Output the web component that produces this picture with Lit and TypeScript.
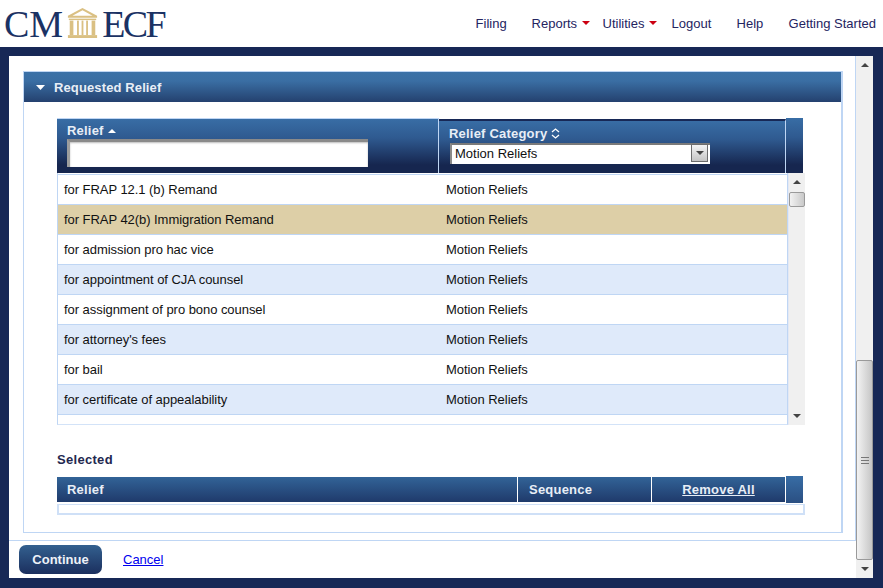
import { LitElement, html, css } from "lit";
import { customElement } from "lit/decorators.js";

const rows = [
  "for FRAP 12.1 (b) Remand",
  "for FRAP 42(b) Immigration Remand",
  "for admission pro hac vice",
  "for appointment of CJA counsel",
  "for assignment of pro bono counsel",
  "for attorney's fees",
  "for bail",
  "for certificate of appealability",
  "for coram nobis",
];

@customElement("app-root")
export class AppRoot extends LitElement {
  static styles = css`
    :host { display: block; width: 883px; height: 588px; overflow: hidden; font-family: "Liberation Sans", Arial, sans-serif; font-size: 13px; color: #111; background: #fff; }
    * { box-sizing: border-box; }
    .page { display: flex; flex-direction: column; height: 588px; }
    .top { height: 47px; display: flex; justify-content: space-between; background: #fff; flex: none; }
    .logo { display: flex; align-items: flex-start; padding: 3px 0 0 4px; font-family: "Liberation Serif", serif; font-size: 38px; line-height: 42px; color: #1b3264; }
    .logo svg { width: 31px; height: 30px; margin: 5px 4px 0 4px; flex: none; }
    .logo .ecf { letter-spacing: -2.6px; }
    nav { display: flex; padding: 16px 7px 0 0; line-height: 15px; color: #24245f; }
    nav span { display: inline-flex; align-items: flex-start; }
    nav i { display: block; width: 0; height: 0; border: 4px solid transparent; border-top: 4px solid #cc0011; border-bottom: 0; margin: 5px 0 0 5px; }
    .n1 { width: 56px; } .n2 { width: 71px; } .n3 { width: 69px; } .n4 { width: 65px; } .n5 { width: 52px; }
    .frame { flex: 1; min-height: 0; background: #172856; padding: 9px 10px 10px 9px; }
    .panel { display: flex; height: 522px; background: #fff; }
    .content { width: 847px; flex: none; display: flex; flex-direction: column; }
    .scroll { height: 485px; padding: 15px 0 0 14px; border-right: 1px solid #bfd6f4; border-bottom: 1px solid #bfd6f4; flex: none; }
    .section { width: 820px; height: 462px; border: 1px solid #bfd6f4; border-right-width: 2px; }
    .bar { height: 30px; display: flex; align-items: center; padding-left: 12px; gap: 9px; font-weight: bold; letter-spacing: .12px; color: #e8eef6; background: linear-gradient(#3b71a8, #3a6ea3 30%, #24416f); }
    .bar svg { width: 9px; height: 5px; }
    .body { padding: 16px 0 0 33px; width: 782px; }
    .thead { display: flex; width: 746px; height: 55px; }
    .th { background: linear-gradient(#386da5, #2f5a90 35%, #16264f 85%); color: #e8eef6; font-weight: bold; letter-spacing: .2px; }
    .th1 { width: 382px; padding: 4px 0 0 10px; border-right: 1px solid #bfd6f4; border-top: 1px solid #bfd6f4; height: 55px; }
    .th2 { width: 347px; padding: 5px 0 0 10px; border-top: 2px solid #172856; margin-top: 1px; height: 54px; border-right: 1px solid #bfd6f4; }
    .th3 { width: 17px; }
    .lbl { display: flex; align-items: center; gap: 4px; height: 15px; }
    .lbl svg { display: block; }
    .input { display: block; width: 301px; height: 28px; margin-top: 1px; padding: 0; background: #fff; border: 0; border-top: 3px solid #8a8a8a; border-left: 3px solid #9d9d9d; box-shadow: inset 0 1px 2px #bbb; }
    .select { display: flex; justify-content: space-between; width: 260px; height: 21px; margin: 2px 0 0 1px; background: #fff; border-top: 2px solid #7a7a7a; border-left: 2px solid #8a8a8a; color: #111; font-weight: normal; letter-spacing: 0; line-height: 17px; padding-left: 3px; }
    .arrow { width: 17px; height: 18px; margin: -1px 2px 0 0; background: linear-gradient(#f4f4f4, #c4c4c4); border: 1px solid #6d6d6d; display: flex; align-items: center; justify-content: center; }
    .listwrap { display: flex; width: 748px; height: 252px; }
    .list { width: 731px; height: 252px; padding-top: 1px; overflow: hidden; border-left: 1px solid #bfd6f4; border-right: 1px solid #bfd6f4; border-bottom: 1px solid #d3e3f8; }
    .row { display: flex; height: 30px; border-bottom: 1px solid #bfd6f4; align-items: center; padding-left: 6px; letter-spacing: -.05px; }
    .row:first-child { border-top: 1px solid #bfd6f4; height: 31px; }
    .row.alt { background: #dfeafa; }
    .row.sel { background: #ddcfa7; }
    .c1 { width: 382px; flex: none; }
    .sb { display: flex; flex-direction: column; align-items: stretch; background: #f0f0f0; }
    .sb-in { width: 17px; height: 252px; border-left: 1px solid #e4e8f4; }
    .up, .down { height: 18px; display: flex; align-items: center; justify-content: center; flex: none; }
    .thumb { background: linear-gradient(90deg, #f2f2f2, #c9c9c9); border: 1px solid #9a9a9a; border-radius: 2px; flex: none; display: flex; align-items: center; justify-content: center; }
    .sb-in .thumb { height: 15px; margin-top: 1px; }
    .spacer { flex: 1; }
    .sel-t { font-weight: bold; letter-spacing: .3px; color: #23284f; margin-top: 27px; height: 15px; line-height: 15px; }
    .thead2 { display: flex; width: 746px; height: 27px; margin-top: 9px; }
    .tb { height: 25px; margin-top: 1px; display: flex; align-items: center; background: linear-gradient(#326397, #1f3a6b); color: #e8eef6; font-weight: bold; letter-spacing: .22px; border-right: 1px solid #fff; }
    .b1 { width: 461px; padding-left: 10px; }
    .b2 { width: 134px; padding-left: 11px; }
    .b3 { width: 134px; justify-content: center; text-decoration: underline; }
    .b4 { flex: 1; height: 27px; background: linear-gradient(#386da5, #2a4f82); }
    .empty { width: 748px; height: 11px; margin-top: 1px; border: 2px solid #cfe0f7; border-width: 1px 2px 2px 2px; }
    .foot { flex: 1; display: flex; align-items: flex-start; padding: 4px 0 0 10px; gap: 21px; }
    .btn { width: 83px; height: 29px; border-radius: 7px; background: linear-gradient(#33608f, #1b2f5e); color: #eef2f8; font-weight: bold; display: flex; align-items: center; justify-content: center; }
    a { color: #0000ee; text-decoration: underline; margin-top: 7px; line-height: 15px; }
    .sb-out { width: 17px; height: 522px; flex: none; }
    .sb-out .thumb { height: 200px; margin-top: 286px; background: linear-gradient(90deg, #f3f3f3, #c6c6c6); }
    .grip { width: 8px; height: 7px; border-top: 1px solid #777; border-bottom: 1px solid #777; background: linear-gradient(#777, #777) center/100% 1px no-repeat; }
  `;

  private arrowUp() {
    return html`<svg width="8" height="4" viewBox="0 0 8 4"><path d="M4 0 8 4H0z" fill="#444"/></svg>`;
  }
  private arrowDown() {
    return html`<svg width="8" height="4" viewBox="0 0 8 4"><path d="M0 0h8L4 4z" fill="#444"/></svg>`;
  }

  render() {
    return html`<div class="page">
      <div class="top">
        <div class="logo">
          <span>CM</span>
          <svg viewBox="0 0 34 31" preserveAspectRatio="none" fill="#dac083">
            <path d="M17 0 33 8v2H1V8zM17 2.4 6 8h22z" fill-rule="evenodd"/>
            <rect x="2" y="11" width="30" height="1.5"/>
            <rect x="3" y="13" width="4" height="15"/><rect x="11" y="13" width="2" height="15"/><rect x="16" y="13" width="2" height="15"/><rect x="21" y="13" width="2" height="15"/><rect x="27" y="13" width="4" height="15"/>
            <rect x="1" y="28" width="32" height="3"/>
          </svg>
          <span class="ecf">ECF</span>
        </div>
        <nav>
          <span class="n1">Filing</span>
          <span class="n2">Reports<i></i></span>
          <span class="n3">Utilities<i></i></span>
          <span class="n4">Logout</span>
          <span class="n5">Help</span>
          <span>Getting Started</span>
        </nav>
      </div>
      <div class="frame">
        <div class="panel">
          <div class="content">
            <div class="scroll">
              <div class="section">
                <div class="bar">
                  <svg viewBox="0 0 9 5"><path d="M0 0h9L4.5 5z" fill="#fff"/></svg>
                  <span>Requested Relief</span>
                </div>
                <div class="body">
                  <div class="thead">
                    <div class="th th1">
                      <div class="lbl">Relief <svg width="8" height="4" viewBox="0 0 8 4"><path d="M4 0 8 4H0z" fill="#fff"/></svg></div>
                      <div class="input"></div>
                    </div>
                    <div class="th th2">
                      <div class="lbl">Relief Category <svg width="9" height="11" viewBox="0 0 9 11" fill="none" stroke="#fff" stroke-width="1.3"><path d="M1 4 4.5 1 8 4M1 7l3.5 3L8 7"/></svg></div>
                      <div class="select">Motion Reliefs<div class="arrow">${this.arrowDown()}</div></div>
                    </div>
                    <div class="th th3"></div>
                  </div>
                  <div class="listwrap">
                    <div class="list">
                      ${rows.map((r, i) => html`<div class="row ${i === 1 ? "sel" : i % 2 ? "alt" : ""}"><div class="c1">${r}</div><div>Motion Reliefs</div></div>`)}
                    </div>
                    <div class="sb sb-in">
                      <div class="up">${this.arrowUp()}</div>
                      <div class="thumb"></div>
                      <div class="spacer"></div>
                      <div class="down">${this.arrowDown()}</div>
                    </div>
                  </div>
                  <div class="sel-t">Selected</div>
                  <div class="thead2">
                    <div class="tb b1">Relief</div>
                    <div class="tb b2">Sequence</div>
                    <div class="tb b3">Remove All</div>
                    <div class="b4"></div>
                  </div>
                  <div class="empty"></div>
                </div>
              </div>
            </div>
            <div class="foot">
              <div class="btn">Continue</div>
              <a href="#">Cancel</a>
            </div>
          </div>
          <div class="sb sb-out">
            <div class="up">${this.arrowUp()}</div>
            <div class="thumb"><div class="grip"></div></div>
            <div class="spacer"></div>
            <div class="down">${this.arrowDown()}</div>
          </div>
        </div>
      </div>
    </div>`;
  }
}
